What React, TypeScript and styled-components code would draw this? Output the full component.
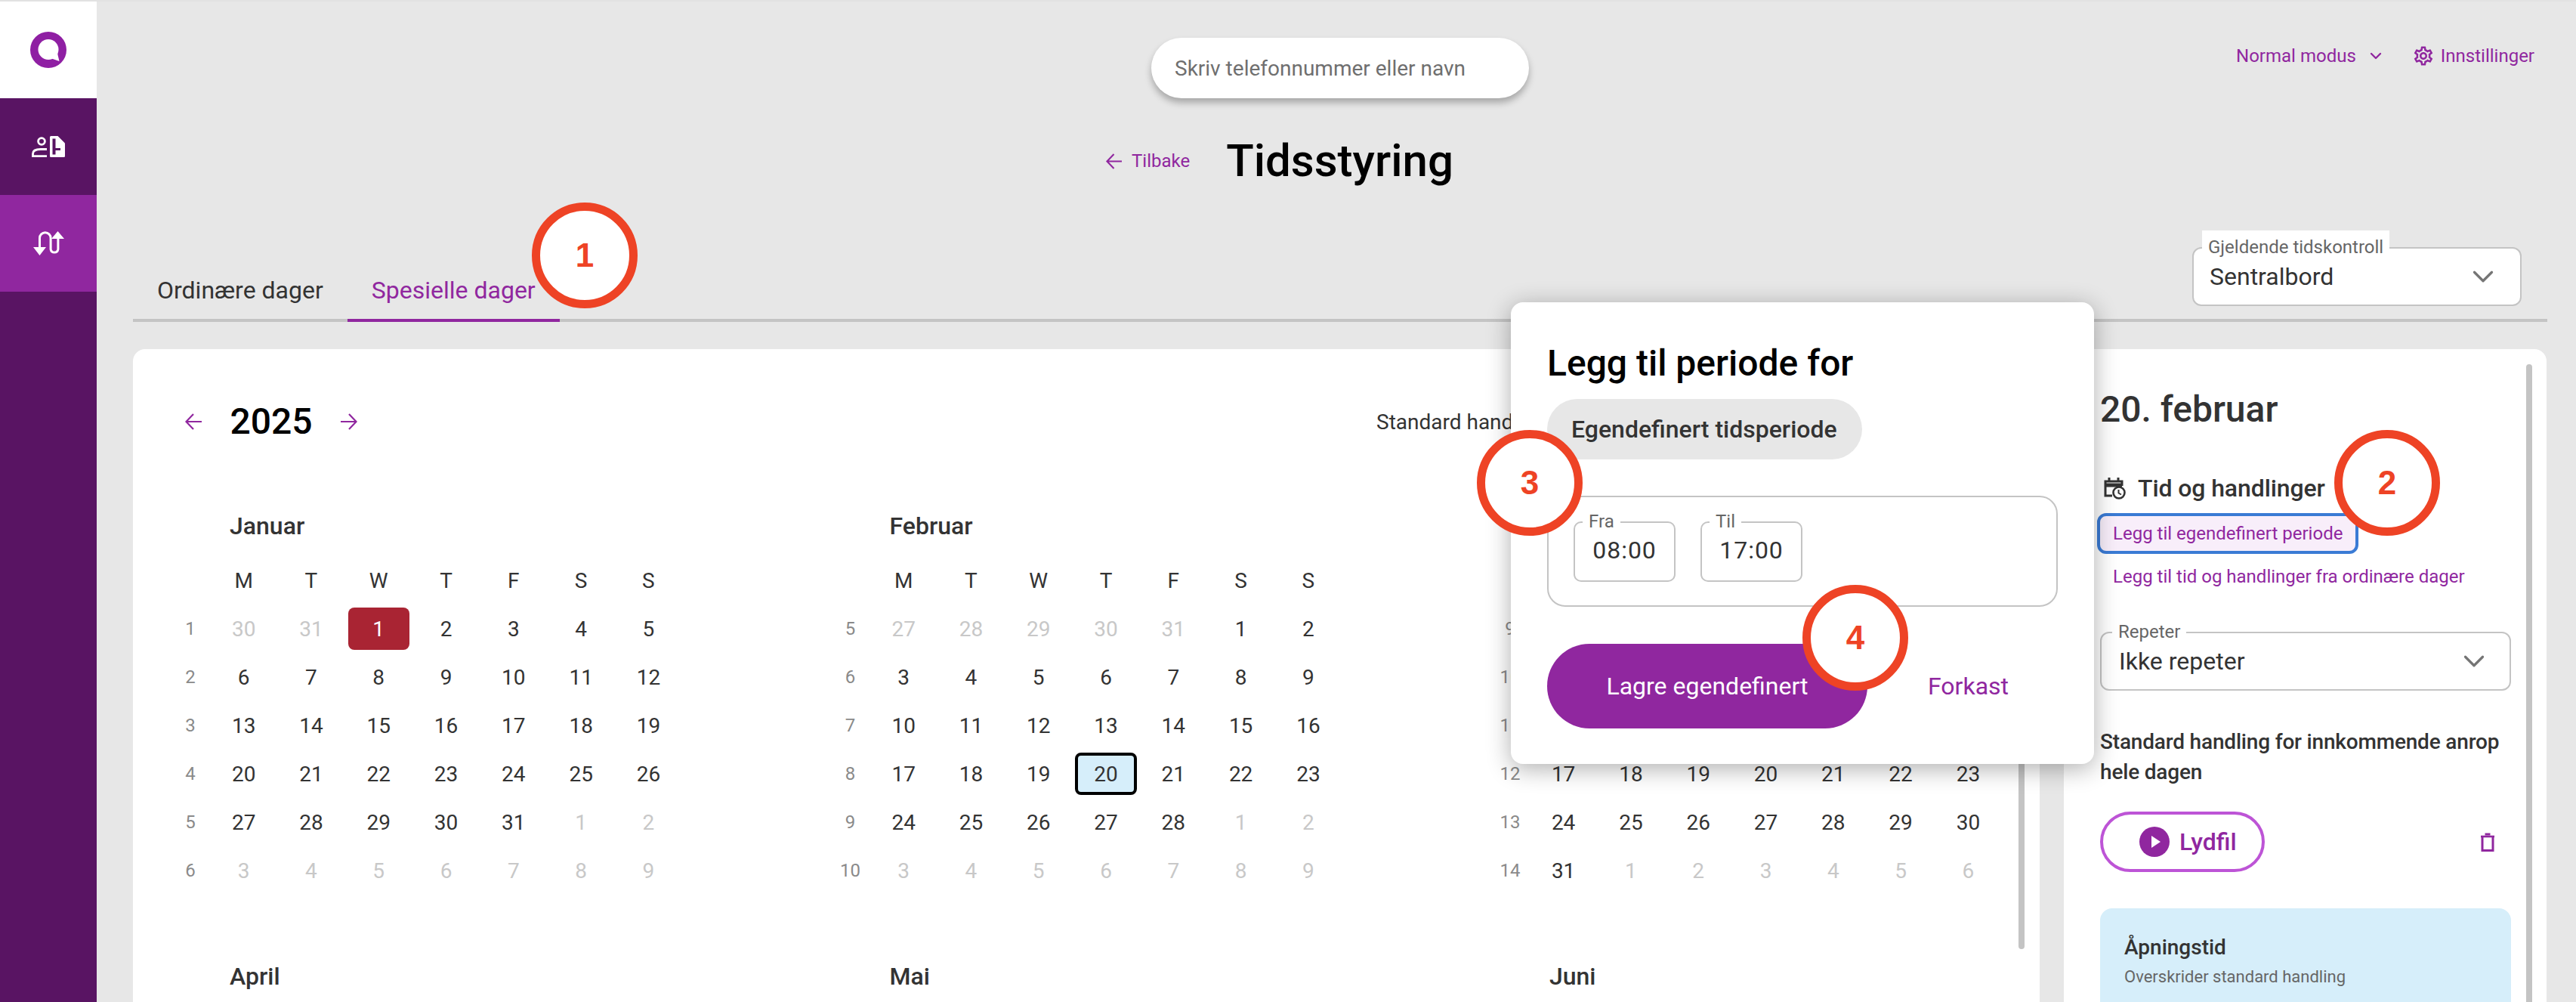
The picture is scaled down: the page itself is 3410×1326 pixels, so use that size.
import React, { FunctionComponent } from "react";
import styled, { createGlobalStyle } from "styled-components";
import { ChevronDown } from "lucide-react";
import { MdOutlineSettings } from "react-icons/md";

const PURPLE = "#90279f";
const INK = "#333333";
const LINE = "#c4c4c4";

const GlobalStyle = createGlobalStyle`
  html, body {
    margin: 0;
    height: 100%;
    overflow: hidden;
    background: #e7e7e7;
    font-family: Roboto, "Liberation Sans", sans-serif;
    color: ${INK};
  }
  * { box-sizing: border-box; }
`;

const Page = styled.div`
  position: relative;
  display: flex;
  width: 3410px;
  height: 1326px;
  overflow: hidden;
  border-top: 2px solid #e2e2e2;
`;

/* Sidebar */

const Sidebar = styled.nav`
  flex: 0 0 128px;
  background: #591463;
`;

const LogoCell = styled.div`
  display: flex;
  height: 128px;
  align-items: center;
  justify-content: center;
  background: #ffffff;
`;

const NavItem = styled.div<{ $active?: boolean }>`
  display: flex;
  height: 128px;
  align-items: center;
  justify-content: center;
  background: ${(p) => (p.$active ? PURPLE : "transparent")};
`;

/* Main column */

const Content = styled.main`
  display: flex;
  flex: 1;
  min-width: 0;
  flex-direction: column;
  padding: 48px 38px 0 48px;
`;

const TopBar = styled.header`
  display: grid;
  flex: none;
  grid-template-columns: 1348px 500px 1fr;
  height: 80px;
`;

const Search = styled.div`
  grid-column: 2;
  display: flex;
  align-items: center;
  padding: 0 31px;
  border-radius: 40px;
  background: #ffffff;
  box-shadow: 0 6px 10px rgba(0, 0, 0, 0.28);
  font-size: 28px;
  color: #6f6f6f;
`;

const TopActions = styled.div`
  display: flex;
  align-items: flex-start;
  justify-content: flex-end;
  gap: 12px;
  padding: 6px 17px 0 0;
  font-size: 24px;
  line-height: 36px;
  color: ${PURPLE};
`;

const ActionItem = styled.span<{ $gap?: number }>`
  display: inline-flex;
  align-items: center;
  gap: 8px;
  margin-left: ${(p) => p.$gap ?? 0}px;
`;

const TitleRow = styled.div`
  display: flex;
  flex: none;
  height: 72px;
  align-items: center;
  margin-top: 47px;
  padding-left: 1288px;
`;

const BackLink = styled.span`
  display: inline-flex;
  align-items: center;
  gap: 13px;
  font-size: 24px;
  color: ${PURPLE};
`;

const Title = styled.h1`
  margin: 0 0 0 48px;
  font-size: 60px;
  font-weight: 500;
  line-height: 72px;
  color: #000000;
`;

const TabsRow = styled.div`
  display: flex;
  flex: none;
  height: 99px;
  justify-content: space-between;
  margin-top: 78px;
  border-bottom: 4px solid ${LINE};
`;

const Tabs = styled.div`
  display: flex;
  align-self: flex-end;
  margin-bottom: -4px;
`;

const Tab = styled.div<{ $active?: boolean }>`
  padding: 0 32px 18px;
  border-bottom: 4px solid ${(p) => (p.$active ? PURPLE : "transparent")};
  font-size: 32px;
  line-height: 40px;
  color: ${(p) => (p.$active ? PURPLE : INK)};
`;

const Outlined = styled.div<{ $width: number; $height: number }>`
  position: relative;
  display: flex;
  flex: none;
  width: ${(p) => p.$width}px;
  height: ${(p) => p.$height}px;
  align-items: center;
  justify-content: space-between;
  padding: 0 ${(p) => (p.$width > 500 ? 34 : 36)}px 0 ${(p) => (p.$width > 500 ? 23 : 21)}px;
  border: 2px solid ${LINE};
  border-radius: 12px;
  background: #ffffff;
  font-size: 32px;
  color: ${INK};
  svg {
    color: #757575;
  }
`;

const TopSelect = styled(Outlined)`
  margin-right: 34px;
`;

const FloatingLabel = styled.span<{ $tall?: boolean }>`
  position: absolute;
  top: ${(p) => (p.$tall ? -24 : -16)}px;
  left: ${(p) => (p.$tall ? 11 : 14)}px;
  height: ${(p) => (p.$tall ? 46 : 28)}px;
  padding: 0 8px;
  background: #ffffff;
  font-size: 24px;
  line-height: ${(p) => (p.$tall ? 44 : 28)}px;
  color: #666666;
  white-space: nowrap;
  letter-spacing: 0;
`;

const TimeLabel = styled(FloatingLabel)`
  left: 10px;
`;

const Cards = styled.div`
  display: flex;
  flex: 1;
  min-height: 0;
  gap: 32px;
  margin: 36px 0 -20px;
`;

const Card = styled.section`
  position: relative;
  border-radius: 16px;
  background: #ffffff;
  overflow: hidden;
`;

const CalendarCard = styled(Card)`
  flex: 0 0 2524px;
  padding: 67px 0 0 54px;
`;

const Scrollbar = styled.div<{ $height: number; $right: number }>`
  position: absolute;
  top: 20px;
  right: ${(p) => p.$right}px;
  width: 8px;
  height: ${(p) => p.$height}px;
  border-radius: 4px;
  background: ${LINE};
`;

const YearRow = styled.div`
  display: flex;
  height: 58px;
  align-items: center;
  gap: 37.5px;
  padding-left: 15px;
`;

const Year = styled.div`
  font-size: 48px;
  font-weight: 500;
  line-height: 58px;
  color: #000000;
`;

const Legend = styled.div`
  margin-left: auto;
  width: 878px;
  font-size: 28px;
  white-space: nowrap;
`;

const MonthGrid = styled.div`
  display: grid;
  grid-template-columns: repeat(3, 669.1px);
  column-gap: 204.4px;
  row-gap: 92px;
  margin-top: 89px;
`;

const MonthName = styled.h3`
  margin: 0 0 24px 74px;
  font-size: 32px;
  font-weight: 500;
  line-height: 40px;
  color: ${INK};
`;

const DayGrid = styled.div`
  display: grid;
  grid-template-columns: 44px repeat(7, 81.3px);
  grid-auto-rows: 56px;
  gap: 8px;
`;

const WeekDay = styled.div`
  display: flex;
  align-items: center;
  justify-content: center;
  font-size: 28px;
  color: ${INK};
`;

const WeekNo = styled.div`
  display: flex;
  align-items: center;
  justify-content: center;
  font-size: 24px;
  color: #8a8a8a;
`;

type DayKind = "normal" | "muted" | "holiday" | "selected";

const dayColor: Record<DayKind, string> = {
  normal: INK,
  muted: "#c8c8c8",
  holiday: "#ffffff",
  selected: INK,
};

const Day = styled.div<{ $kind: DayKind }>`
  display: flex;
  align-items: center;
  justify-content: center;
  border-radius: 8px;
  border: ${(p) => (p.$kind === "selected" ? "4px solid #000000" : "none")};
  background: ${(p) =>
    p.$kind === "holiday" ? "#a92433" : p.$kind === "selected" ? "#d6eefa" : "transparent"};
  font-size: 28px;
  color: ${(p) => dayColor[p.$kind]};
`;

/* Detail panel */

const DetailCard = styled(Card)`
  flex: 0 0 639px;
  padding: 50px 0 0 48px;
`;

const DetailTitle = styled.h2`
  margin: 0;
  font-size: 48px;
  font-weight: 500;
  line-height: 60px;
`;

const SectionHead = styled.div`
  display: flex;
  align-items: center;
  gap: 16px;
  margin-top: 54px;
  padding-left: 4px;
  font-size: 32px;
  font-weight: 500;
  line-height: 40px;
  letter-spacing: -0.1px;
`;

const TextLink = styled.div<{ $focused?: boolean }>`
  width: fit-content;
  font-size: 24px;
  line-height: 46px;
  color: ${PURPLE};
  white-space: nowrap;
  ${(p) =>
    p.$focused
      ? `margin: 13px 0 7px -4px;
         padding: 0 17px;
         height: 54px;
         border: 4px solid #3a7bd5;
         border-radius: 12px;
         background: #f8eefa;`
      : `margin: 0; padding-left: 17px;`}
`;

const RepeatSelect = styled(Outlined)`
  margin-top: 50px;
`;

const ActionHeading = styled.div`
  width: 544px;
  margin-top: 48px;
  font-size: 28px;
  font-weight: 500;
  line-height: 40px;
  letter-spacing: -0.18px;
`;

const ActionRow = styled.div`
  display: flex;
  width: 544px;
  align-items: center;
  justify-content: space-between;
  margin-top: 32px;
  padding-right: 22px;
`;

const AudioButton = styled.div`
  display: flex;
  width: 218px;
  height: 80px;
  align-items: center;
  gap: 13px;
  padding-left: 48px;
  border: 4px solid #bd54d6;
  border-radius: 40px;
  font-size: 32px;
  font-weight: 500;
  color: ${PURPLE};
`;

const InfoCard = styled.div`
  width: 544px;
  height: 200px;
  margin-top: 48px;
  padding: 32px;
  border-radius: 16px;
  background: #d6eefa;
`;

const InfoTitle = styled.div`
  font-size: 28px;
  font-weight: 500;
  line-height: 40px;
`;

const InfoText = styled.div`
  margin-top: 2px;
  font-size: 22px;
  line-height: 34px;
  color: #666666;
`;

/* Popup and annotation markers */

const Dialog = styled.div`
  position: absolute;
  top: 398px;
  left: 2000px;
  width: 772px;
  height: 611px;
  padding: 53px 48px 0;
  border-radius: 16px;
  background: #ffffff;
  box-shadow: 0 6px 32px rgba(0, 0, 0, 0.32);
`;

const DialogTitle = styled.h2`
  margin: 0;
  font-size: 48px;
  font-weight: 500;
  line-height: 56px;
  color: #000000;
`;

const Chip = styled.div`
  display: inline-flex;
  height: 80px;
  align-items: center;
  margin-top: 19px;
  padding: 0 33px 0 32px;
  border-radius: 40px;
  background: #e7e7e7;
  font-size: 32px;
  font-weight: 500;
  color: ${INK};
`;

const TimeBox = styled.div`
  display: flex;
  width: 676px;
  height: 147px;
  gap: 33px;
  margin-top: 48px;
  padding: 32px 0 0 33px;
  border: 2px solid ${LINE};
  border-radius: 24px;
`;

const TimeField = styled.div`
  position: relative;
  width: 135px;
  height: 80px;
  padding-top: 16px;
  border: 2px solid ${LINE};
  border-radius: 10px;
  font-size: 32px;
  line-height: 40px;
  letter-spacing: 1px;
  text-align: center;
`;

const DialogActions = styled.div`
  display: flex;
  align-items: center;
  gap: 80px;
  margin-top: 49px;
`;

const SaveButton = styled.div`
  display: flex;
  width: 424px;
  height: 112px;
  align-items: center;
  justify-content: center;
  border-radius: 56px;
  background: ${PURPLE};
  font-size: 32px;
  color: #ffffff;
`;

const DiscardLink = styled.div`
  font-size: 32px;
  color: ${PURPLE};
`;

const Marker = styled.div<{ $x: number; $y: number }>`
  position: absolute;
  top: ${(p) => p.$y - 72}px;
  left: ${(p) => p.$x - 70}px;
  display: flex;
  width: 140px;
  height: 140px;
  align-items: center;
  justify-content: center;
  border: 11px solid #ee4325;
  border-radius: 50%;
  background: #ffffff;
  font-family: "Liberation Sans", Arial, sans-serif;
  font-size: 44px;
  font-weight: 700;
  color: #ee4325;
`;

/* Drawn icons */

const Logo = () => (
  <svg width="48" height="48" viewBox="0 0 48 48">
    <circle cx="24" cy="24" r="24" fill="#8f1fa3" />
    <circle cx="24" cy="23.5" r="13.5" fill="#ffffff" />
    <path d="M34 20 L38.5 39 L27 35 Z" fill="#ffffff" />
  </svg>
);

const PersonDocIcon = () => (
  <svg width="46" height="30" viewBox="41 179 46 30">
    <circle cx="55" cy="187" r="4.4" fill="none" stroke="#fff" strokeWidth="2.8" />
    <path d="M62 197.5 h-8 c-6 0 -10.5 2 -10.5 6 v3.2 h18.5" fill="none" stroke="#fff" strokeWidth="2.8" />
    <path d="M67.5 180 h9 l9.5 9.5 v17 a1.5 1.5 0 0 1 -1.5 1.5 h-17 a1.5 1.5 0 0 1 -1.5 -1.5 v-25 a1.5 1.5 0 0 1 1.5 -1.5 z" fill="#fff" />
    <path d="M69.5 183.5 h4 v21 h-4 z M72 196 h8 v3 h-8 z" fill="#591463" />
  </svg>
);

const SwapIcon = () => (
  <svg width="42" height="34" viewBox="43 305 42 34">
    <path d="M52.5 328 V315 a7.3 7.3 0 0 1 14.6 0 V330 a5 5 0 0 0 9.8 0 V315" fill="none" stroke="#fff" strokeWidth="3" />
    <path d="M44 327 H61 L52.5 338 Z M68 316 H85 L76.5 306 Z" fill="#fff" />
  </svg>
);

const Arrow: FunctionComponent<{ dir: "left" | "right"; size: number }> = ({ dir, size }) => (
  <svg
    width={size}
    height={size}
    viewBox="0 0 22 22"
    fill="none"
    stroke={PURPLE}
    strokeWidth="2.2"
    style={{ transform: dir === "right" ? "scaleX(-1)" : undefined, flex: "none" }}
  >
    <path d="M11 1 L1.5 11 L11 21 M1.5 11 H22" />
  </svg>
);

const CalendarClockIcon = () => (
  <svg width="30" height="30" viewBox="0 0 30 30" fill="none" stroke={INK} strokeWidth="3">
    <path d="M12 25 H3 V6 H25 V12" />
    <path d="M3 11 H25" strokeWidth="5" />
    <path d="M8 1 V6 M20 1 V6" />
    <circle cx="21" cy="21" r="7.5" fill="#fff" strokeWidth="2.6" />
    <path d="M20.5 17 V21.5 L24 23.5" strokeWidth="2" />
  </svg>
);

const PlayIcon = () => (
  <svg width="40" height="40" viewBox="0 0 40 40">
    <circle cx="20" cy="20" r="20" fill={PURPLE} />
    <path d="M16 12 L28 20 L16 28 Z" fill="#fff" />
  </svg>
);

const TrashIcon = () => (
  <svg width="18" height="25" viewBox="0 0 18 25" fill="none" stroke={PURPLE}>
    <path d="M0 5 H18" strokeWidth="2.6" />
    <path d="M5.5 2 H12.5" strokeWidth="3" />
    <path d="M2 6 V23.5 H16 V6" strokeWidth="3" />
  </svg>
);

/* Calendar data */

interface CalendarDay {
  day: number;
  kind: DayKind;
}

const DAY_MS = 86400000;
const FIRST_MONDAY = Date.UTC(2024, 11, 30);

const buildWeeks = (month: number): { week: number; days: CalendarDay[] }[] => {
  const first = new Date(Date.UTC(2025, month, 1));
  const start = first.getTime() - ((first.getUTCDay() + 6) % 7) * DAY_MS;

  return Array.from({ length: 6 }, (_, row) => {
    const weekStart = start + row * 7 * DAY_MS;
    return {
      week: Math.round((weekStart - FIRST_MONDAY) / (7 * DAY_MS)) + 1,
      days: Array.from({ length: 7 }, (_, col) => {
        const date = new Date(weekStart + col * DAY_MS);
        const day = date.getUTCDate();
        let kind: DayKind = date.getUTCMonth() === month ? "normal" : "muted";
        if (month === 0 && day === 1 && kind === "normal") kind = "holiday";
        if (month === 1 && day === 20 && kind === "normal") kind = "selected";
        return { day, kind };
      }),
    };
  });
};

const MONTHS = ["Januar", "Februar", "Mars", "April", "Mai", "Juni"];
const WEEK_DAYS = ["M", "T", "W", "T", "F", "S", "S"];

const Month: FunctionComponent<{ name: string; index: number }> = ({ name, index }) => (
  <div>
    <MonthName>{name}</MonthName>
    <DayGrid>
      <span />
      {WEEK_DAYS.map((d, i) => (
        <WeekDay key={i}>{d}</WeekDay>
      ))}
      {buildWeeks(index).map(({ week, days }) => (
        <React.Fragment key={week}>
          <WeekNo>{week}</WeekNo>
          {days.map((d, i) => (
            <Day key={i} $kind={d.kind}>
              {d.day}
            </Day>
          ))}
        </React.Fragment>
      ))}
    </DayGrid>
  </div>
);

const App = () => (
  <Page>
    <GlobalStyle />
    <Sidebar>
      <LogoCell>
        <Logo />
      </LogoCell>
      <NavItem>
        <PersonDocIcon />
      </NavItem>
      <NavItem $active>
        <SwapIcon />
      </NavItem>
    </Sidebar>

    <Content>
      <TopBar>
        <Search>Skriv telefonnummer eller navn</Search>
        <TopActions>
          <ActionItem>
            Normal modus
            <ChevronDown size={24} strokeWidth={2.4} style={{ marginLeft: 6 }} />
          </ActionItem>
          <ActionItem $gap={24}>
            <MdOutlineSettings size={30} />
            Innstillinger
          </ActionItem>
        </TopActions>
      </TopBar>

      <TitleRow>
        <BackLink>
          <Arrow dir="left" size={21} />
          Tilbake
        </BackLink>
        <Title>Tidsstyring</Title>
      </TitleRow>

      <TabsRow>
        <Tabs>
          <Tab>Ordinære dager</Tab>
          <Tab $active>Spesielle dager</Tab>
        </Tabs>
        <TopSelect $width={436} $height={78}>
          <FloatingLabel $tall>Gjeldende tidskontroll</FloatingLabel>
          Sentralbord
          <ChevronDown size={46} strokeWidth={1.7} style={{ marginRight: -10 }} />
        </TopSelect>
      </TabsRow>

      <Cards>
        <CalendarCard>
          <YearRow>
            <Arrow dir="left" size={22} />
            <Year>2025</Year>
            <Arrow dir="right" size={22} />
            <Legend>Standard handling for innkommende anrop</Legend>
          </YearRow>
          <MonthGrid>
            {MONTHS.map((name, i) => (
              <Month key={name} name={name} index={i} />
            ))}
          </MonthGrid>
          <Scrollbar $height={774} $right={20} />
        </CalendarCard>

        <DetailCard>
          <DetailTitle>20. februar</DetailTitle>
          <SectionHead>
            <CalendarClockIcon />
            Tid og handlinger
          </SectionHead>
          <TextLink $focused>Legg til egendefinert periode</TextLink>
          <TextLink>Legg til tid og handlinger fra ordinære dager</TextLink>
          <RepeatSelect $width={544} $height={78}>
            <FloatingLabel>Repeter</FloatingLabel>
            Ikke repeter
            <ChevronDown size={46} strokeWidth={1.7} style={{ marginRight: -10 }} />
          </RepeatSelect>
          <ActionHeading>Standard handling for innkommende anrop hele dagen</ActionHeading>
          <ActionRow>
            <AudioButton>
              <PlayIcon />
              Lydfil
            </AudioButton>
            <TrashIcon />
          </ActionRow>
          <InfoCard>
            <InfoTitle>Åpningstid</InfoTitle>
            <InfoText>Overskrider standard handling</InfoText>
          </InfoCard>
          <Scrollbar $height={900} $right={19} />
        </DetailCard>
      </Cards>
    </Content>

    <Dialog>
      <DialogTitle>Legg til periode for</DialogTitle>
      <Chip>Egendefinert tidsperiode</Chip>
      <TimeBox>
        <TimeField>
          <TimeLabel>Fra</TimeLabel>
          08:00
        </TimeField>
        <TimeField>
          <TimeLabel>Til</TimeLabel>
          17:00
        </TimeField>
      </TimeBox>
      <DialogActions>
        <SaveButton>Lagre egendefinert</SaveButton>
        <DiscardLink>Forkast</DiscardLink>
      </DialogActions>
    </Dialog>

    <Marker $x={774} $y={338}>1</Marker>
    <Marker $x={3160} $y={639}>2</Marker>
    <Marker $x={2025} $y={639}>3</Marker>
    <Marker $x={2456} $y={844}>4</Marker>
  </Page>
);

export default App;
